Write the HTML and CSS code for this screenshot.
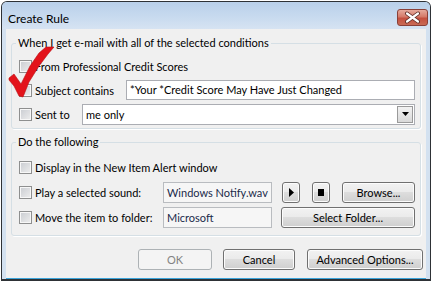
FILE: index.html
```html
<!DOCTYPE html>
<html lang="en">
<head>
    <meta charset="UTF-8">
    <title>Create Rule</title>
    <link rel="stylesheet" href="styles.css">
</head>
<body>
    <div class="window">
        <div class="titlebar">
            <span class="title">Create Rule</span>
            <button class="close" title="Close">
                <svg width="29" height="15" viewBox="0 0 29 15">
                    <path d="M9 3.5 L20 11.5 M20 3.5 L9 11.5" stroke="#5a2a24" stroke-width="4" stroke-linecap="round"/>
                    <path d="M9 3.5 L20 11.5 M20 3.5 L9 11.5" stroke="#fff" stroke-width="2.2" stroke-linecap="round"/>
                </svg>
            </button>
        </div>

        <div class="client">
            <fieldset class="group g-conditions">
                <legend>When I get e-mail with all of the selected conditions</legend>
                <div class="row">
                    <label class="chk"><span class="box"></span>From Professional Credit Scores</label>
                </div>
                <div class="row">
                    <label class="chk w-subject"><span class="box"></span>Subject contains</label>
                    <div class="edit grow">*Your *Credit Score May Have Just Changed</div>
                </div>
                <div class="row">
                    <label class="chk w-sent"><span class="box"></span>Sent to</label>
                    <div class="combo grow">
                        <span class="combo-text">me only</span>
                        <span class="drop">
                            <svg width="7" height="4" viewBox="0 0 7 4"><polygon points="0,0 7,0 3.5,4" fill="#000"/></svg>
                        </span>
                    </div>
                </div>
            </fieldset>

            <fieldset class="group g-actions">
                <legend>Do the following</legend>
                <div class="row">
                    <label class="chk"><span class="box"></span>Display in the New Item Alert window</label>
                </div>
                <div class="row">
                    <label class="chk w-action"><span class="box"></span>Play a selected sound:</label>
                    <div class="edit readonly w-file">Windows Notify.wav</div>
                    <button class="btn icon-btn play">
                        <svg width="5" height="9" viewBox="0 0 5 9"><polygon points="0,0 5,4.5 0,9" fill="#000"/></svg>
                    </button>
                    <button class="btn icon-btn stop">
                        <svg width="6" height="7" viewBox="0 0 6 7"><rect width="6" height="7" fill="#000"/></svg>
                    </button>
                    <button class="btn browse grow">Browse...</button>
                </div>
                <div class="row">
                    <label class="chk w-action"><span class="box"></span>Move the item to folder:</label>
                    <div class="edit readonly w-file">Microsoft</div>
                    <button class="btn select-folder grow">Select Folder...</button>
                </div>
            </fieldset>

            <div class="buttons">
                <button class="btn ok" disabled>OK</button>
                <button class="btn cancel">Cancel</button>
                <button class="btn advanced">Advanced Options...</button>
            </div>
        </div>

        <!-- red tick drawn over the dialog -->
        <svg class="tick" width="60" height="100" viewBox="0 0 60 100">
            <polygon points="9,78 14,74 21,84 30,66 39,53 46,47 54,47 48,54 39,66 29,82 23,97 19,96 14,86 9,80" fill="#e3131b" stroke="#b80d12" stroke-width="0.6"/>
        </svg>
    </div>
</body>
</html>
```

FILE: styles.css
```css
body {
    margin: 0;
    background: #fff;
    font-family: Lato, "Liberation Sans", sans-serif;
    font-size: 11px;
    color: #000;
}
.window {
    position: relative;
    margin: 1px 0 0 1px;
    width: 428px;
    border: 1px solid #2e3236;
    border-bottom-width: 2px;
    border-radius: 6px 6px 0 0;
    background: #d3e1f0;
}
.titlebar {
    height: 27px;
    display: flex;
    align-items: flex-start;
    background: linear-gradient(#b9d0ea, #c9dbef 60%, #d6e3f2);
    border-radius: 5px 5px 0 0;
}
.title {
    padding: 10px 0 0 6px;
    line-height: 14px;
    font-size: 12px;
}
.close {
    margin: 7px 2px 0 auto;
    width: 31px;
    height: 17px;
    padding: 0;
    border: 1px solid #8a4038;
    border-radius: 3px;
    background: linear-gradient(#e6aa9c, #d57a69 45%, #c4503f 55%, #c96b55);
    display: flex;
    align-items: center;
    justify-content: center;
}
.client {
    box-sizing: border-box;
    height: 250px;
    margin: 0 4px;
    padding: 6px 5px 0 5px;
    background: #f0f0f0;
    border-bottom: 1px solid #3ba4da;
}
/* group boxes */
.group {
    margin: 0;
    border: 1px solid #d5dfe5;
    border-radius: 3px;
    box-shadow: 1px 1px 0 #fff;
}
.group legend {
    padding: 0 2px;
    margin-left: -3px;
    line-height: 16px;
    white-space: nowrap;
}
.g-conditions {
    padding: 5px 5px 4px 7px;
}
.g-actions {
    margin-top: 5px;
    padding: 7px 5px 7px 7px;
}
.row {
    display: flex;
    align-items: center;
    height: 20px;
}
.row + .row {
    margin-top: 4px;
}
.g-actions .row {
    height: 21px;
}
.grow {
    flex: 1;
}
/* checkbox + label */
.chk {
    display: flex;
    align-items: center;
    gap: 3px;
    flex: none;
    white-space: nowrap;
}
.box {
    box-sizing: border-box;
    width: 13px;
    height: 13px;
    border: 1px solid #8e8f8f;
    background: linear-gradient(135deg, #c9ccd1, #eeeeee);
    box-shadow: inset 0 0 0 1px #f7f7f7;
}
.w-subject {
    width: 107px;
}
.w-sent {
    width: 63px;
}
.w-action {
    width: 144px;
}
/* edit boxes */
.edit {
    box-sizing: border-box;
    height: 20px;
    border: 1px solid #abadb3;
    background: #fff;
    padding: 0 3px;
    line-height: 18px;
    white-space: nowrap;
}
.readonly {
    height: 21px;
    line-height: 19px;
    background: #f6f6f6;
    border-color: #b9bcc0;
    color: #1b2a4a;
}
.w-file {
    width: 109px;
    flex: none;
}
.combo {
    box-sizing: border-box;
    height: 21px;
    border: 1px solid #abadb3;
    background: #fff;
    display: flex;
    align-items: center;
    padding: 0 1px 0 3px;
}
.combo-text {
    flex: 1;
}
.drop {
    box-sizing: border-box;
    width: 16px;
    height: 17px;
    border: 1px solid #9a9a9a;
    background: linear-gradient(#f2f2f2, #d9d9d9);
    display: flex;
    align-items: center;
    justify-content: center;
}
/* buttons */
.btn {
    box-sizing: border-box;
    height: 21px;
    padding: 0;
    border: 1px solid #707070;
    border-radius: 3px;
    background: linear-gradient(#f2f2f2, #ebebeb 45%, #dddddd 50%, #cfcfcf);
    box-shadow: inset 0 0 0 1px #fcfcfc;
    font: inherit;
    color: #000;
}
.btn:disabled {
    border-color: #adb2b5;
    background: #f4f4f4;
    box-shadow: none;
    color: #838383;
}
.icon-btn {
    width: 18px;
    flex: none;
    display: flex;
    align-items: center;
    justify-content: center;
}
.play {
    margin-left: 10px;
}
.stop {
    margin-left: 12px;
}
.browse {
    margin-left: 12px;
}
.select-folder {
    margin-left: 9px;
}
.buttons {
    display: flex;
    justify-content: flex-end;
    gap: 11px;
    margin: 13px -2px 0 0;
}
.ok {
    width: 74px;
}
.cancel {
    width: 72px;
}
.advanced {
    width: 116px;
    margin-left: 1px;
}
.tick {
    position: absolute;
    left: -2px;
    top: -2px;
}
```
